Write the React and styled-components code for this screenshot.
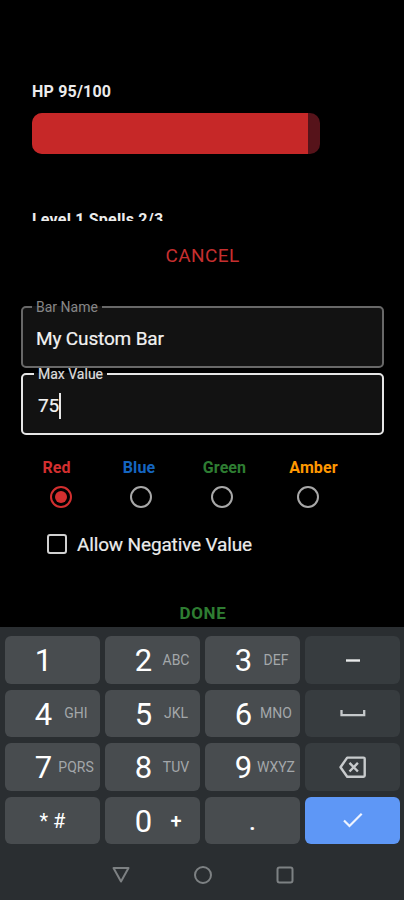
import React from "react";
import styled, { createGlobalStyle } from "styled-components";

const GlobalStyle = createGlobalStyle`
* {
  box-sizing:border-box;
}
body {
  margin:0;
  background:#000;
  font-family:Roboto, "Liberation Sans", sans-serif;
}
`;
const Screen = styled.div`
width:404px;
height:900px;
display:flex;
flex-direction:column;
overflow:hidden;
background:#000;
`;

// Bars behind the form, the last one is cut by the form's top edge
const BarList = styled.div`
height:221px;
padding:82px 0 0 32px;
overflow:hidden;
`;
const BarTitle = styled.div`
height:19px;
line-height:19px;
font-size:16px;
font-weight:700;
letter-spacing:0.2px;
color:#ececec;
white-space:nowrap;
`;
const BarTrack = styled.div`
width:288px;
height:41px;
margin:12px 0 56px;
border-radius:10px;
background:#56131a;
overflow:hidden;
`;
const BarFill = styled.div`
box-sizing:content-box;
height:100%;
padding-right:2px;
background:#c62828;
`;

// Form
const Form = styled.div`
height:406px;
display:flex;
flex-direction:column;
`;
const TextButton = styled.button`
align-self:center;
height:24px;
padding:0;
margin:${(props) => props.margin};
border:none;
background:none;
font-family:inherit;
line-height:24px;
font-size:${(props) => props.size};
font-weight:${(props) => props.weight};
letter-spacing:${(props) => props.spacing};
color:${(props) => props.color};
`;
const Field = styled.fieldset`
width:363px;
height:70px;
margin:0 0 0 21px;
padding:0 0 0 ${(props) => (props.focused ? "11px" : "9px")};
border:${(props) => (props.focused ? "2.6px solid #e6e6e6" : "2px solid #686868")};
border-radius:5px;
background:#121212;

& + & {
  margin-top:-3px;
}
`;
const FieldLabel = styled.legend`
height:18px;
padding:0 4px;
line-height:18px;
font-size:14px;
color:${(props) => (props.focused ? "#dedede" : "#868686")};
-webkit-text-stroke:${(props) => (props.focused ? "0.2px" : "0")};
`;
const FieldValue = styled.div`
display:flex;
align-items:center;
height:26px;
margin-top:${(props) => props.top};
padding-left:4px;
line-height:26px;
font-size:19px;
letter-spacing:-0.15px;
color:#f2f2f2;
-webkit-text-stroke:0.2px;
`;
const Caret = styled.span`
width:2px;
height:26px;
background:#e6e6e6;
`;
const ColorRow = styled.div`
display:grid;
grid-template-columns:80px 80px 81px 91px;
margin:23px 0 0 21px;
`;
const ColorOption = styled.div`
display:flex;
flex-direction:column;
align-items:center;
gap:8px;
`;
const ColorName = styled.div`
height:20px;
margin-left:${(props) => props.shift};
line-height:20px;
font-size:16px;
font-weight:700;
letter-spacing:0.1px;
color:${(props) => props.color};
`;
const Radio = styled.div`
display:flex;
align-items:center;
justify-content:center;
width:22px;
height:22px;
border:2px solid ${(props) => (props.checked ? "#d32f2f" : "#a8a8a8")};
border-radius:50%;

&::after {
  content:"";
  display:${(props) => (props.checked ? "block" : "none")};
  width:12px;
  height:12px;
  border-radius:50%;
  background:#d32f2f;
}
`;
const CheckRow = styled.div`
display:flex;
align-items:center;
gap:10px;
height:26px;
margin:23px 0 0 47px;
`;
const CheckBox = styled.div`
width:20px;
height:20px;
border:2.5px solid #d0d0d0;
border-radius:3px;
`;
const CheckLabel = styled.div`
padding-top:1px;
font-size:19px;
line-height:26px;
letter-spacing:-0.15px;
color:#ececec;
white-space:nowrap;
-webkit-text-stroke:0.2px;
`;

// Keyboard
const Keyboard = styled.div`
height:273px;
padding:9px 4px 0 5px;
background:#2a2e31;
`;
const Keys = styled.div`
display:grid;
grid-template-columns:repeat(4, 95px);
grid-template-rows:repeat(4, 47.5px);
gap:6px 5px;
`;
const Key = styled.div`
display:grid;
grid-template-columns:${(props) => (props.wide ? "1fr" : "24px 41px")};
align-items:center;
justify-items:center;
padding-left:${(props) => (props.wide ? "0" : "26.5px")};
border-radius:6px;
color:#fff;
background:${(props) => props.back || "#484c4f"};
`;
const Digit = styled.span`
font-size:31px;
line-height:47px;
padding-top:1px;
`;
const Letters = styled.span`
font-size:14px;
line-height:20px;
margin-top:-1px;
color:#a3a7aa;
`;
const Plus = styled.span`
font-size:20px;
font-weight:500;
line-height:20px;
padding-top:1px;
`;
const Symbols = styled.span`
font-size:20px;
line-height:24px;
padding-top:2px;
`;
const Period = styled.span`
font-size:28px;
line-height:30px;
padding-top:2px;
-webkit-text-stroke:0.2px;
`;
const NavBar = styled.div`
display:flex;
align-items:center;
justify-content:center;
gap:62px;
height:62px;
`;

const keys = [
  { digit: "1" },
  { digit: "2", letters: "ABC" },
  { digit: "3", letters: "DEF" },
  { icon: "minus" },
  { digit: "4", letters: "GHI" },
  { digit: "5", letters: "JKL" },
  { digit: "6", letters: "MNO" },
  { icon: "space" },
  { digit: "7", letters: "PQRS" },
  { digit: "8", letters: "TUV" },
  { digit: "9", letters: "WXYZ" },
  { icon: "erase" },
  { symbols: "* #" },
  { digit: "0", plus: "+" },
  { period: "." },
  { icon: "check" },
];

const colors = [
  { name: "Red", color: "#d32f2f", shift: "-9px", checked: true },
  { name: "Blue", color: "#1565c0", shift: "-4px" },
  { name: "Green", color: "#2e7d32", shift: "6px" },
  { name: "Amber", color: "#ff9800", shift: "12px" },
];

function KeyIcon({ name }) {
  return (
    <svg width="32" height="32" viewBox="0 0 32 32" fill="none">
      {name === "minus" && <path d="M9 16.5h14" stroke="#e8eaea" strokeWidth="2.4" />}
      {name === "space" && <path d="M4.5 13v5.2h22.7V13" stroke="#c5c9cb" strokeWidth="2.3" />}
      {name === "erase" && (
        <g stroke="#c8cbcd" strokeWidth="2.4">
          <path d="M10.2 6.6H26.5q1.2 0 1.2 1.2V24.6q0 1.2-1.2 1.2H10.2L3.5 16.2Z" strokeLinejoin="round" />
          <path d="M12.5 11.8l8.4 8.7M20.9 11.8l-8.4 8.7" />
        </g>
      )}
      {name === "check" && <path d="M7 16.5l5.5 5.5L24.7 9.7" stroke="#eef3ff" strokeWidth="2.2" />}
    </svg>
  );
}

function KeyPad() {
  return (
    <Keys>
      {keys.map((item, index) => {
        if (item.icon) {
          return (
            <Key key={index} wide back={item.icon === "check" ? "#5e97f6" : "#373c3f"}>
              <KeyIcon name={item.icon} />
            </Key>
          );
        }
        if (item.symbols) {
          return <Key key={index} wide><Symbols>{item.symbols}</Symbols></Key>;
        }
        if (item.period) {
          return <Key key={index} wide><Period>{item.period}</Period></Key>;
        }
        return (
          <Key key={index}>
            <Digit>{item.digit}</Digit>
            {item.plus ? <Plus>{item.plus}</Plus> : <Letters>{item.letters}</Letters>}
          </Key>
        );
      })}
    </Keys>
  );
}

export default function App() {
  const hp = 95;
  return (
    <>
      <GlobalStyle />
      <Screen>
        <BarList>
          <BarTitle>HP {hp}/100</BarTitle>
          <BarTrack>
            <BarFill style={{ width: hp + "%" }} />
          </BarTrack>
          <BarTitle>Level 1 Spells 2/3</BarTitle>
        </BarList>
        <Form>
          <TextButton margin="23px 0 30px 1px" size="19px" weight="400" spacing="0.4px" color="#c62f2f">CANCEL</TextButton>
          <Field>
            <FieldLabel>Bar Name</FieldLabel>
            <FieldValue top="10px">My Custom Bar</FieldValue>
          </Field>
          <Field focused>
            <FieldLabel focused>Max Value</FieldLabel>
            <FieldValue top="10px">75<Caret /></FieldValue>
          </Field>
          <ColorRow>
            {colors.map((item) => (
              <ColorOption key={item.name}>
                <ColorName color={item.color} shift={item.shift}>{item.name}</ColorName>
                <Radio checked={item.checked} />
              </ColorOption>
            ))}
          </ColorRow>
          <CheckRow>
            <CheckBox />
            <CheckLabel>Allow Negative Value</CheckLabel>
          </CheckRow>
          <TextButton margin="44px 0 0 2px" size="17px" weight="700" spacing="0.7px" color="#2e7d32">DONE</TextButton>
        </Form>
        <Keyboard>
          <KeyPad />
          <NavBar>
            <svg width="20" height="20" viewBox="0 0 20 20" fill="none" stroke="#7d8183" strokeWidth="2">
              <path d="M2.5 3h15L10 16.5Z" strokeLinejoin="round" />
            </svg>
            <svg width="20" height="20" viewBox="0 0 20 20" fill="none" stroke="#7d8183" strokeWidth="2">
              <circle cx="10" cy="10" r="8" />
            </svg>
            <svg width="20" height="20" viewBox="0 0 20 20" fill="none" stroke="#7d8183" strokeWidth="2">
              <rect x="2.5" y="2.5" width="15" height="15" rx="2" />
            </svg>
          </NavBar>
        </Keyboard>
      </Screen>
    </>
  );
}
